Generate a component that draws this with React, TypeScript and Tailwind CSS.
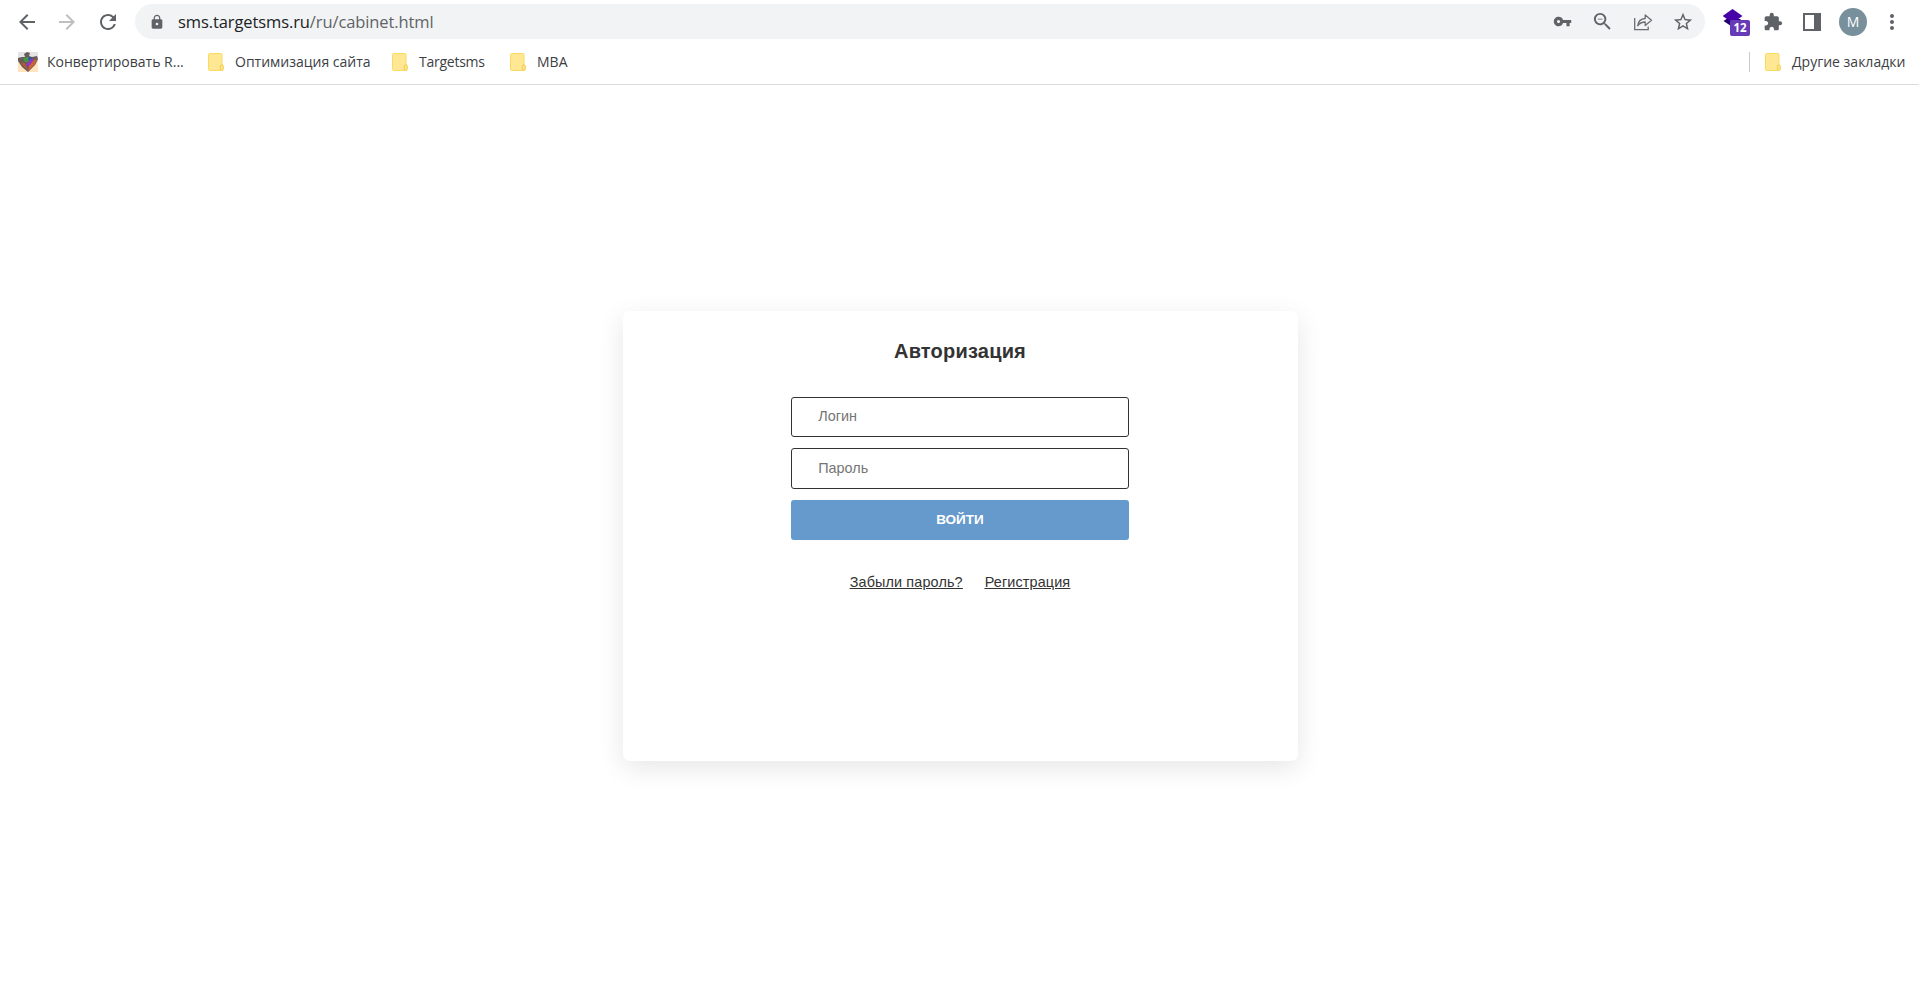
import React from 'react';
import {
  MdArrowBack,
  MdArrowForward,
  MdExtension,
  MdLock,
  MdMoreVert,
  MdRefresh,
  MdStarBorder,
  MdVpnKey,
  MdZoomOut,
} from 'react-icons/md';

const BOOKMARKS = [
  { title: 'Оптимизация сайта', style: 'w-[136px] mr-[21px]' },
  { title: 'Targetsms', style: 'w-[68px] mr-[23px] tracking-[-0.25px]' },
  { title: 'MBA', style: 'w-[34px]' },
];

const FolderIcon: React.FC = () => (
  <svg width="16" height="18" viewBox="0 0 16 18" className="shrink-0">
    <rect x="0.5" y="0.5" width="13.5" height="17" rx="1" fill="#ffe793" stroke="#fbda61" />
    <rect x="12.3" y="11.8" width="3" height="5.6" rx="1.4" fill="#fde58d" stroke="#f3cd4e" />
  </svg>
);

const ConverterIcon: React.FC = () => (
  <svg width="20" height="20" viewBox="0 0 20 20" className="shrink-0">
    <rect width="20" height="10" fill="#e4e4e6" />
    <rect y="10" width="20" height="10" fill="#ffe4bd" />
    <path d="M0 6l4-1 3 0-1-3 3-2 3 1-1 3 3 1 5-1 1 3-3 6-7 7-6-5-4-6z" fill="#6b5a58" />
    <path d="M5 7l3-2 4 1-2 4-3 0z" fill="#3f9a45" />
    <path d="M11 5l3 0-1 3-3 0z" fill="#2f55a8" />
    <path d="M8 13l5-6 3 1-5 7z" fill="#9038c8" />
    <path d="M3 10l4 1 3 7-5-4z" fill="#b0583c" />
    <path d="M16 8l3-1-3 6-6 6 1-5z" fill="#d0642f" />
  </svg>
);

const ShareIcon: React.FC = () => (
  <svg width="20" height="20" viewBox="0 0 20 20" fill="none" stroke="#6a6e72" strokeWidth="1.3">
    <path d="M1.7 6v11.6h13.5v-3" />
    <path d="M4.7 13.8c.4-4.5 3-7 7.500-7.300V3l6.300 5.300-6.300 5.200V10c-3.500 0-5.800 1.200-7.500 3.800z" strokeLinejoin="round" />
  </svg>
);

const LayersExtension: React.FC = () => (
  <div className="relative h-[28px] w-[28px]">
    <svg width="28" height="28" viewBox="0 0 28 28">
      <path d="M0.500 13l3-2h14v6l-8 2z" fill="#23006e" />
      <path d="M9.500 1l10 7-10 7-10-7z" fill="#4503a8" />
    </svg>
    <span className="absolute left-[7px] top-[12px] flex h-[16px] w-[20px] items-center justify-center rounded-[2px] bg-[#673ab7] font-['Open_Sans',sans-serif] text-[11.5px] font-bold leading-none text-white">
      12
    </span>
  </div>
);

const AddressBar: React.FC = () => (
  <div className="flex h-[35px] w-[1570px] items-center rounded-full bg-[#f1f3f4] pl-[14px] pr-[11px] text-[#5f6368]">
    <MdLock size={16} />
    <span className="ml-[13px] whitespace-nowrap font-['Open_Sans',sans-serif] text-[16.5px] leading-6 tracking-[-0.1px]">
      <span className="text-[#202124]">sms.targetsms.ru</span>/ru/cabinet.html
    </span>
    <div className="ml-auto flex items-center">
      <MdVpnKey size={19} className="mr-[19px]" />
      <MdZoomOut size={23} className="mr-[19px]" />
      <ShareIcon />
      <MdStarBorder size={22} className="ml-[19px]" />
    </div>
  </div>
);

const BrowserHeader: React.FC = () => (
  <header className="h-[85px] border-b border-[#dadce0] bg-white pt-1">
    <div className="flex h-[35px] items-center text-[#5f6368]">
      <MdArrowBack size={24} className="ml-[15px]" />
      <MdArrowForward size={24} className="ml-4 text-[#bdbfc1]" />
      <MdRefresh size={24} className="ml-[17px] mr-[15px]" />
      <AddressBar />
      <div className="ml-[18px] flex items-center">
        <LayersExtension />
        <MdExtension size={20} className="ml-[12px]" />
        <svg width="18" height="18" className="ml-[20px]">
          <path fillRule="evenodd" d="M0 0h18v18H0zM2 2v14h9V2z" fill="#5f6368" />
        </svg>
        <span className="ml-[18px] flex h-7 w-7 items-center justify-center rounded-full bg-[#78909c] font-['Open_Sans',sans-serif] text-[14px] text-white">
          M
        </span>
        <MdMoreVert size={24} className="ml-[13px]" />
      </div>
    </div>
    <nav className="flex h-[45px] items-center pl-[18px] pr-[12px] font-['Open_Sans',sans-serif] text-[14px] text-[#3c4043]">
      <ConverterIcon />
      <span className="ml-[9px] mr-[22px] w-[139px] whitespace-nowrap">Конвертировать R...</span>
      {BOOKMARKS.map((bookmark) => (
        <div key={bookmark.title} className="flex items-center">
          <FolderIcon />
          <span className={`ml-[11px] whitespace-nowrap ${bookmark.style}`}>{bookmark.title}</span>
        </div>
      ))}
      <div className="ml-auto flex items-center">
        <span className="mr-[15px] h-5 w-px bg-[#c8cacc]" />
        <FolderIcon />
        <span className="ml-[11px] w-[115px] whitespace-nowrap">Другие закладки</span>
      </div>
    </nav>
  </header>
);

const App: React.FC = () => {
  return (
    <div className="h-[981px] overflow-hidden bg-white font-['Liberation_Sans',sans-serif]">
      <BrowserHeader />
      <main className="flex justify-center pl-px pt-[226px]">
        <form className="flex h-[450px] w-[675px] flex-col items-center rounded-[7px] bg-white pt-[28px] shadow-[0_7px_27px_rgba(0,0,0,0.1)]">
          <h1 className="text-[20px] font-bold leading-[24px] tracking-[0.2px] text-[#333]">Авторизация</h1>
          <div className="mt-[34px] flex w-[337.5px] flex-col">
            <input
              placeholder="Логин"
              className="h-[40px] rounded-[3px] border border-[#333] pb-[2px] pl-[26px] text-[14.4px] placeholder:text-[#757575]"
            />
            <input
              type="password"
              placeholder="Пароль"
              className="mt-[11px] h-[41px] rounded-[3px] border border-[#333] pb-[2px] pl-[26px] text-[14.4px] placeholder:text-[#757575]"
            />
            <button type="button" className="mt-[11px] h-[40px] rounded-[3px] bg-[#6699cc] text-[13.5px] font-bold text-white">
              ВОЙТИ
            </button>
          </div>
          <div className="mt-[31px] flex gap-[22px] text-[14.4px] leading-[22px] tracking-[0.13px] text-[#333] underline">
            <a href="#">Забыли пароль?</a>
            <a href="#">Регистрация</a>
          </div>
        </form>
      </main>
    </div>
  );
};

export default App;
